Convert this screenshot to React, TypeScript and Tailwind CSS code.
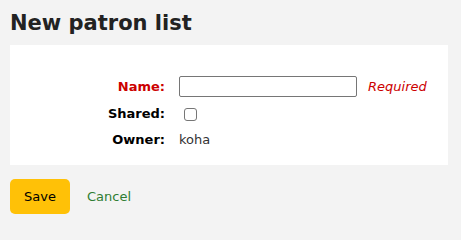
export default function App() {
  return (
    <div className="min-h-[240px] w-full bg-[#f3f3f3] px-[10px] pt-[8px] font-['DejaVu_Sans',sans-serif] text-[13px] text-[#333]">
      <h1 className="text-[21px] font-bold leading-[30px] text-[#222]">New patron list</h1>
      <div className="mt-[7px] mr-[3px] bg-white pt-[31px] pb-[15px]">
        <div className="flex flex-col">
          <div className="flex h-[21px] items-center">
            <label className="w-[155px] text-right font-bold text-[#cc0000]">Name:</label>
            <input
              type="text"
              className="ml-[14px] h-[21px] w-[178px] rounded-[2px] border border-[#767676] bg-white px-1 outline-none"
            />
            <span className="ml-[11px] italic text-[#cc0000]">Required</span>
          </div>
          <div className="mt-[7px] flex h-[20px] items-center">
            <label className="w-[155px] text-right font-bold text-black">Shared:</label>
            <input
              type="checkbox"
              className="ml-[19px] h-[13px] w-[13px] appearance-none rounded-[3px] border border-[#767676] bg-white"
            />
          </div>
          <div className="mt-[6px] flex h-[20px] items-center">
            <label className="w-[155px] text-right font-bold text-black">Owner:</label>
            <span className="ml-[14px]">koha</span>
          </div>
        </div>
      </div>
      <div className="mt-[14px] flex items-center">
        <button className="h-[35px] w-[60px] rounded-[5px] bg-[#ffc107] text-[13px] text-black">Save</button>
        <a href="#" className="ml-[17px] text-[#2f7d32]">Cancel</a>
      </div>
    </div>
  );
}
